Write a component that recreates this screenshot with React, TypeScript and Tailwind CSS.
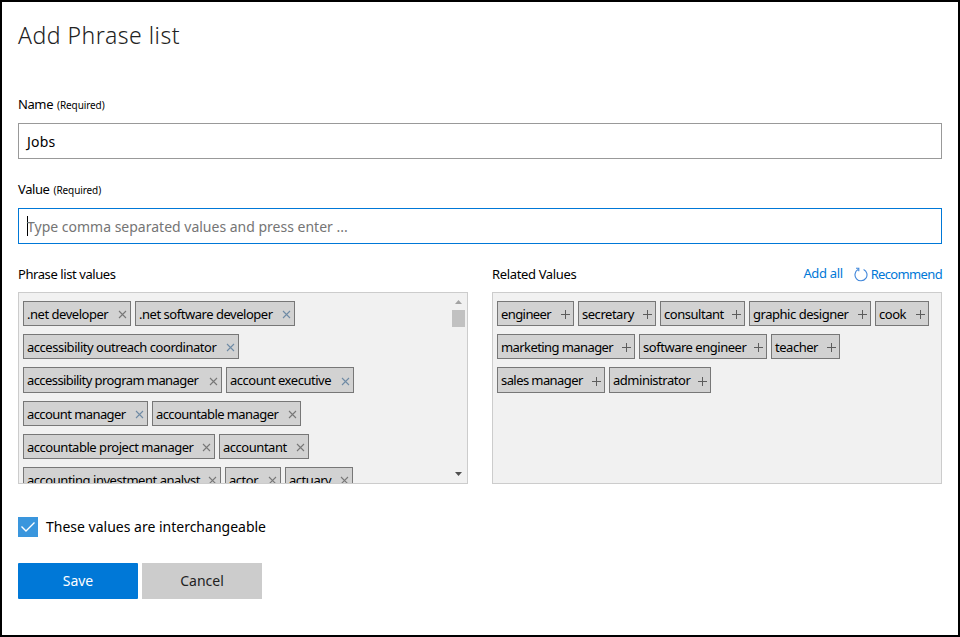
import React from "react";

type Chip = { label: string; box: string; tight?: boolean };

const phraseRows: Chip[][] = [
  [
    { label: ".net developer", box: "w-[108px]" },
    { label: ".net software developer", box: "w-[160px]" },
  ],
  [{ label: "accessibility outreach coordinator", box: "w-[216px]" }],
  [
    { label: "accessibility program manager", box: "w-[199px]", tight: true },
    { label: "account executive", box: "w-[128px]" },
  ],
  [
    { label: "account manager", box: "w-[125px]", tight: true },
    { label: "accountable manager", box: "w-[149px]", tight: true },
  ],
  [
    { label: "accountable project manager", box: "w-[192px]" },
    { label: "accountant", box: "w-[90px]" },
  ],
  [
    { label: "accounting investment analyst", box: "w-[198px]" },
    { label: "actor", box: "w-[56px]" },
    { label: "actuary", box: "w-[68px]" },
  ],
];

const relatedRows: Chip[][] = [
  [
    { label: "engineer", box: "w-[77px]", tight: true },
    { label: "secretary", box: "w-[78px]" },
    { label: "consultant", box: "w-[85px]" },
    { label: "graphic designer", box: "w-[122px]" },
    { label: "cook", box: "w-[54px]" },
  ],
  [
    { label: "marketing manager", box: "w-[138px]", tight: true },
    { label: "software engineer", box: "w-[128px]" },
    { label: "teacher", box: "w-[69px]" },
  ],
  [
    { label: "sales manager", box: "w-[108px]", tight: true },
    { label: "administrator", box: "w-[102px]" },
  ],
];

function CloseIcon({ color }: { color: string }) {
  return (
    <svg className={`mt-0.5 mr-[3px] h-[9px] w-[9px] shrink-0 ${color}`} viewBox="0 0 9 9" fill="none" stroke="currentColor" strokeWidth="1.1">
      <path d="M1 1 8 8M8 1 1 8" />
    </svg>
  );
}

function PlusIcon() {
  return (
    <svg className="mt-0.5 mr-[3px] h-[9px] w-[9px] shrink-0 text-[#5c5c5c]" viewBox="0 0 9 9" fill="none" stroke="currentColor" strokeWidth="1">
      <path d="M4.5 0V9M0 4.5H9" />
    </svg>
  );
}

const blueMarked = [".net software developer", "accessibility outreach coordinator", "account executive", "account manager"];

function ChipRows({ rows, kind }: { rows: Chip[][]; kind: "close" | "plus" }) {
  return (
    <div className="flex flex-col gap-2 pt-[7.7px] pl-1">
      {rows.map((row, i) => (
        <div key={i} className="flex gap-1">
          {row.map((chip) => (
            <div
              key={chip.label}
              className={`flex h-[25.33px] shrink-0 items-center justify-between border border-[#777] bg-[#d2d2d2] pl-[3px] text-[13px] leading-none whitespace-nowrap text-black ${chip.box}`}
            >
              <span className={`pt-[1.5px] ${chip.tight ? "tracking-[-0.58px]" : "tracking-[-0.47px]"}`}>{chip.label}</span>
              {kind === "close" ? (
                <CloseIcon color={blueMarked.includes(chip.label) ? "text-[#6f8ba5]" : "text-[#777]"} />
              ) : (
                <PlusIcon />
              )}
            </div>
          ))}
        </div>
      ))}
    </div>
  );
}

function Label({ text }: { text: string }) {
  return (
    <div className="flex h-[19px] items-baseline gap-1 text-black">
      <span className="text-[13px] leading-[19px] tracking-[-0.4px]">{text}</span>
      <span className="text-[10px] leading-[19px] tracking-[-0.1px]">(Required)</span>
    </div>
  );
}

export default function App() {
  return (
    <div className="h-[637px] w-[960px] overflow-hidden border-2 border-black bg-white px-4 font-['Noto_Sans','Open_Sans',sans-serif]">
      <h1 className="mt-[15px] h-[37px] text-[23px] leading-9 font-[350] tracking-[0.5px] text-[#222]">Add Phrase list</h1>

      <div className="mt-[41px]">
        <Label text="Name" />
        <div className="mt-[9px] flex h-9 items-center border border-[#999] pl-2 text-[14px] text-black">
          <span className="tracking-[0.2px]">Jobs</span>
        </div>
      </div>

      <div className="mt-[21px]">
        <Label text="Value" />
        <div className="mt-[9px] flex h-9 items-center border border-[#0078d7] pl-2 text-[14px] text-[#757575]">
          <span className="h-5 w-px bg-black" />
          <span className="-ml-px">Type comma separated values and press enter ...</span>
        </div>
      </div>

      <div className="mt-5 flex gap-6">
        <section className="w-[450px]">
          <h2 className="h-7 text-[13px] leading-5 tracking-[-0.42px] text-black">Phrase list values</h2>
          <div className="flex h-48 justify-between overflow-hidden border border-[#ccc] bg-[#f1f1f1]">
            <ChipRows rows={phraseRows} kind="close" />
            <div className="mr-0.5 flex w-[13px] flex-col items-center">
              <svg className="mt-[7px] h-1 w-[7px] text-[#a3a3a3]" viewBox="0 0 7 4" fill="currentColor">
                <path d="M3.5 0 7 4H0Z" />
              </svg>
              <div className="mt-1.5 h-[17px] w-[13px] bg-[#c1c1c1]" />
              <svg className="mt-auto mb-[7px] h-1 w-[7px] text-[#505050]" viewBox="0 0 7 4" fill="currentColor">
                <path d="M0 0H7L3.5 4Z" />
              </svg>
            </div>
          </div>
        </section>

        <section className="w-[450px]">
          <div className="flex h-7 justify-between text-[13px] leading-5 tracking-[-0.35px]">
            <h2 className="text-black">Related Values</h2>
            <div className="flex text-[#0078d7]">
              <span className="-mt-px mr-[11px]">Add all</span>
              <svg className="mt-[3px] mr-[3px] h-[15px] w-[14px] text-[#3f86da]" viewBox="0 0 14 15" fill="none" stroke="currentColor" strokeWidth="1.1">
                <path d="M4 2.6A6 6 0 1 0 9.6 2.4M2 1.2H4.8V4.2" />
              </svg>
              <span className="tracking-[-0.65px]">Recommend</span>
            </div>
          </div>
          <div className="h-48 overflow-hidden border border-[#ccc] bg-[#f1f1f1]">
            <ChipRows rows={relatedRows} kind="plus" />
          </div>
        </section>
      </div>

      <div className="mt-[33px] flex h-5 items-center gap-2">
        <div className="flex h-5 w-5 items-center justify-center bg-[#3a96dd]">
          <svg className="h-3 w-4" viewBox="0 0 16 12" fill="none" stroke="white" strokeWidth="1.4">
            <path d="M1.5 5.5 6 10 14.5 1.5" />
          </svg>
        </div>
        <span className="text-[14px] leading-5 text-black">These values are interchangeable</span>
      </div>

      <div className="mt-[26px] flex gap-1 text-[14px]">
        <button className="h-9 w-[120px] rounded-[1px] bg-[#0078d7] pb-0.5 text-white">Save</button>
        <button className="h-9 w-[120px] bg-[#ccc] pb-0.5 text-[#222]">Cancel</button>
      </div>
    </div>
  );
}
